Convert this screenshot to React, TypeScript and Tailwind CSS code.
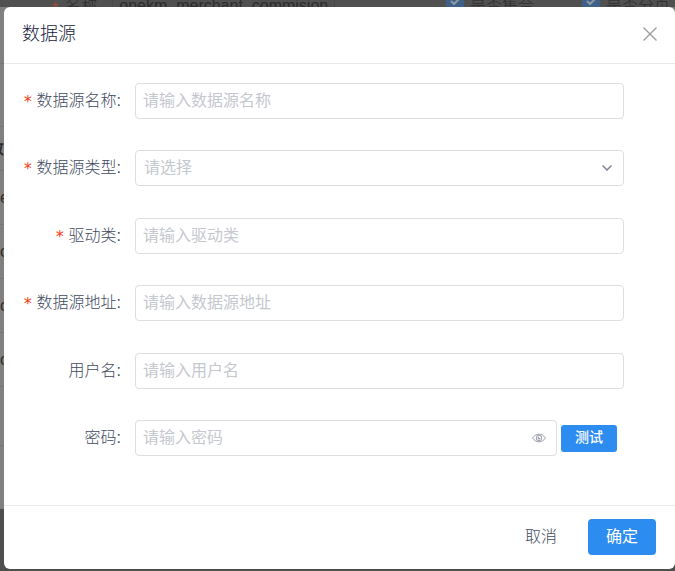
import type { ReactNode } from "react";

const fieldClass =
  "block h-9 w-full rounded border border-[#dcdee2] bg-white px-[7px] text-base font-normal text-[#515a6e] outline-none placeholder:text-[#c5c8ce] focus:border-[#57a3f3]";

function Field({
  id,
  label,
  required,
  children,
}: {
  id: string;
  label: string;
  required?: boolean;
  children: ReactNode;
}) {
  return (
    <div className="flex items-center gap-3.5">
      <label
        htmlFor={id}
        className="flex w-[117px] shrink-0 items-center justify-end gap-1 text-base leading-6 font-light whitespace-nowrap text-[#414a60]"
      >
        {required && (
          <span className="font-['DejaVu_Sans_Mono',monospace] pt-0.5 leading-5 text-[#ed4014]">*</span>
        )}
        <span>{label}:</span>
      </label>
      <div className="min-w-0 flex-1">{children}</div>
    </div>
  );
}

function BackgroundCheck({ label }: { label: string }) {
  return (
    <label className="flex items-end gap-1.5">
      <span className="flex size-[18px] items-center justify-center bg-[#3f6187]">
        <input type="checkbox" defaultChecked tabIndex={-1} className="sr-only" />
        <svg viewBox="0 0 18 18" className="size-[18px]" fill="none" stroke="#8b97a5" strokeWidth="2">
          <path d="M5 12l3 3 6-6" />
        </svg>
      </span>
      <span className="h-[18px] text-base leading-[34px]">{label}</span>
    </label>
  );
}

function Backdrop() {
  const rows = ["e", "o", "c", "o"];
  return (
    <div aria-hidden="true" className="absolute inset-0 flex flex-col overflow-hidden bg-[#4e4e4e] font-light text-[#2c2c2c]">
      <div className="flex h-[7px] shrink-0 items-end bg-[#505050]">
        <div className="flex w-[446px] shrink-0 items-end gap-[5px] pl-[52px]">
          <span className="h-[18px] text-base leading-10 font-normal text-[#a04a35]">*</span>
          <span className="h-[18px] w-11 pl-0.5 text-base leading-[34px]">名称</span>
          <span className="h-[18px] border-x border-[#484848] px-1.5 text-base leading-[34px]">
            onekm_merchant_commision
          </span>
        </div>
        <div className="flex shrink-0 gap-12">
          <BackgroundCheck label="是否集合" />
          <BackgroundCheck label="是否分页" />
        </div>
      </div>
      <div className="h-[502px] shrink-0 bg-[#82807e] pt-14">
        <div className="h-[63px] border-t border-[#787674]" />
        <table className="w-full border-collapse text-base">
          <thead>
            <tr className="h-11 border-y border-[#787674]">
              <th className="p-0 text-left">
                <div className="-ml-3">数据</div>
              </th>
            </tr>
          </thead>
          <tbody>
            {rows.map((text, index) => (
              <tr key={index} className="h-[54px] border-b border-[#787674]">
                <td className="p-0">{text}</td>
              </tr>
            ))}
            <tr className="h-[59px] border-b border-[#787674]">
              <td className="p-0" />
            </tr>
          </tbody>
        </table>
      </div>
    </div>
  );
}

export default function App() {
  return (
    <main className="relative min-h-screen font-['Liberation_Sans','Noto_Sans_CJK_SC',sans-serif]">
      <Backdrop />
      <div className="relative pt-[7px] pb-0.5 pl-1">
        <section role="dialog" aria-labelledby="dialog-title" className="rounded-md bg-white font-light">
          <header className="flex h-[57px] items-center justify-between border-b border-[#e8eaec] px-[18px] pb-0.5">
            <h1 id="dialog-title" className="text-lg leading-6 text-[#17233d]">
              数据源
            </h1>
            <button type="button" aria-label="关闭" className="text-[#999999]">
              <svg viewBox="0 0 14 14" className="size-3.5" fill="none" stroke="currentColor" strokeWidth="1.2">
                <path d="M.5 .5l13 13M13.5 .5l-13 13" />
              </svg>
            </button>
          </header>

          <form className="pt-[19px] pr-[51px] pb-[49px]" onSubmit={(event) => event.preventDefault()}>
            <div className="flex min-h-[373px] flex-col justify-between">
              <Field id="name" label="数据源名称" required>
                <input id="name" className={fieldClass} placeholder="请输入数据源名称" />
              </Field>
              <Field id="type" label="数据源类型" required>
                <div className="relative">
                  <select
                    id="type"
                    defaultValue=""
                    className="block h-9 w-full appearance-none rounded border border-[#dcdee2] bg-white px-2 text-base font-normal text-[#c5c8ce] outline-none"
                  >
                    <option value="">请选择</option>
                  </select>
                  <svg
                    viewBox="0 0 10 6"
                    className="pointer-events-none absolute top-[15px] right-3 h-1.5 w-2.5"
                    fill="none"
                    stroke="#808695"
                    strokeWidth="1.5"
                  >
                    <path d="M.5 .5L5 5 9.500 .5" />
                  </svg>
                </div>
              </Field>
              <Field id="driver" label="驱动类" required>
                <input id="driver" className={fieldClass} placeholder="请输入驱动类" />
              </Field>
              <Field id="url" label="数据源地址" required>
                <input id="url" className={fieldClass} placeholder="请输入数据源地址" />
              </Field>
              <Field id="user" label="用户名">
                <input id="user" className={fieldClass} placeholder="请输入用户名" />
              </Field>
              <Field id="password" label="密码">
                <div className="flex items-end gap-1 pr-[7px]">
                  <div className="relative min-w-0 flex-1">
                    <input id="password" type="password" className={fieldClass} placeholder="请输入密码" />
                    <button type="button" aria-label="显示密码" className="absolute top-3 right-[11px] text-[#9a9fab]">
                      <svg viewBox="0 0 14 12" className="h-3 w-3.5" fill="none" stroke="currentColor" strokeWidth="1">
                        <path d="M.5 6C2.300 3.400 4.500 2.200 7 2.200S11.700 3.400 13.500 6C11.700 8.600 9.500 9.800 7 9.800S2.300 8.600.5 6z" />
                        <circle cx="7" cy="6" r="2.800" />
                        <path d="M7 4.500A1.500 1.500 0 1 0 8.500 6H7z" fill="currentColor" stroke="none" />
                      </svg>
                    </button>
                  </div>
                  <button
                    type="button"
                    className="mb-1 h-[27px] w-14 rounded-[3px] bg-[#2d8cf0] pb-0.5 text-sm leading-5 font-medium text-white"
                  >
                    测试
                  </button>
                </div>
              </Field>
            </div>
          </form>

          <footer className="flex h-16 items-center justify-end border-t border-[#e8eaec] pr-[19px] pb-0.5">
            <button type="button" className="h-9 w-[94px] text-base font-light text-[#414a60]">
              取消
            </button>
            <button type="button" className="h-9 w-[68px] rounded bg-[#2d8cf0] text-base font-normal text-white">
              确定
            </button>
          </footer>
        </section>
      </div>
    </main>
  );
}
